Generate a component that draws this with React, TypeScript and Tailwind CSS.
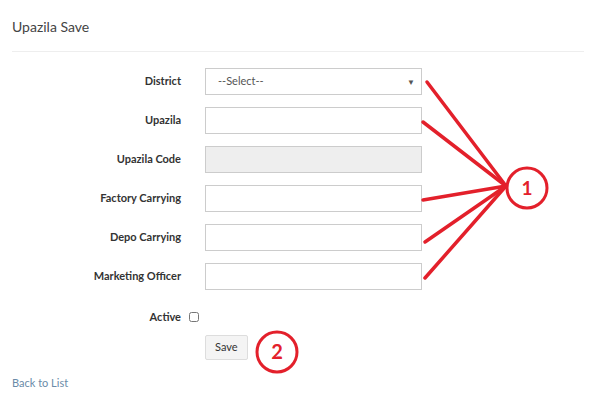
const fields = [
  { label: 'District', kind: 'select' },
  { label: 'Upazila', kind: 'text' },
  { label: 'Upazila Code', kind: 'readonly' },
  { label: 'Factory Carrying', kind: 'text' },
  { label: 'Depo Carrying', kind: 'text' },
  { label: 'Marketing Officer', kind: 'text' },
];

function Field({ label, kind }: { label: string; kind: string }) {
  return (
    <div className="flex items-center h-[27px]">
      <label className="w-[169px] text-right text-[11px] font-bold text-[#333]">{label}</label>
      <div className="ml-6 w-[217px] h-[27px]">
        {kind === 'select' ? (
          <div className="flex items-center justify-between h-full border border-[#ccc] bg-white pl-3 pr-[6px] text-[11px] text-[#555]">
            <span>--Select--</span>
            <span className="text-[8px] text-[#555]">▼</span>
          </div>
        ) : (
          <input
            type="text"
            readOnly={kind === 'readonly'}
            className={
              kind === 'readonly'
                ? 'w-full h-full border border-[#ccc] bg-[#eee] outline-none'
                : 'w-full h-full border border-[#ccc] bg-white outline-none'
            }
          />
        )}
      </div>
    </div>
  );
}

function Annotations() {
  const c1 = { x: 527, y: 188 };
  const tip = { x: 506, y: 186 };
  const starts = [
    [427, 82],
    [423, 122],
    [423, 200],
    [425, 242],
    [425, 278],
  ];
  return (
    <svg className="absolute inset-0 pointer-events-none" width="596" height="410">
      {starts.map(([x, y], i) => (
        <line key={i} x1={x} y1={y} x2={tip.x} y2={tip.y} stroke="#e3202b" strokeWidth="3.5" strokeLinecap="round" />
      ))}
      <circle cx={c1.x} cy={c1.y} r="20" fill="white" stroke="#e3202b" strokeWidth="3" />
      <text x={c1.x} y={c1.y + 7} textAnchor="middle" fontSize="19" fontWeight="bold" fill="#e3202b" fontFamily="Lato, sans-serif">1</text>
      <circle cx="277" cy="352" r="20" fill="white" stroke="#e3202b" strokeWidth="3" />
      <text x="277" y="359" textAnchor="middle" fontSize="20" fontWeight="bold" fill="#e3202b" fontFamily="Lato, sans-serif">2</text>
    </svg>
  );
}

export default function App() {
  return (
    <div className="relative w-[596px] h-[410px] bg-white overflow-hidden" style={{ fontFamily: 'Lato, "Open Sans", sans-serif' }}>
      <div className="px-3">
        <h1 className="pt-[18px] text-[14px] leading-[18px] text-[#444]">Upazila Save</h1>
        <div className="mt-[15px] border-t border-[#eee]" />
        <div className="mt-[16px] flex flex-col gap-3">
          {fields.map((f) => (
            <Field key={f.label} label={f.label} kind={f.kind} />
          ))}
        </div>
        <div className="mt-[20px] flex items-center h-[14px]">
          <label className="w-[169px] text-right text-[11px] font-bold text-[#333]">Active</label>
          <input type="checkbox" className="ml-2 w-[10px] h-[10px]" />
        </div>
        <div className="mt-[9px] ml-[193px]">
          <button className="h-[25px] px-[9px] border border-[#ddd] bg-[#f4f4f4] rounded-[2px] text-[11px] text-[#333]">Save</button>
        </div>
        <a className="block mt-[15px] text-[11px] text-[#6a8ba8]">Back to List</a>
      </div>
      <Annotations />
    </div>
  );
}
